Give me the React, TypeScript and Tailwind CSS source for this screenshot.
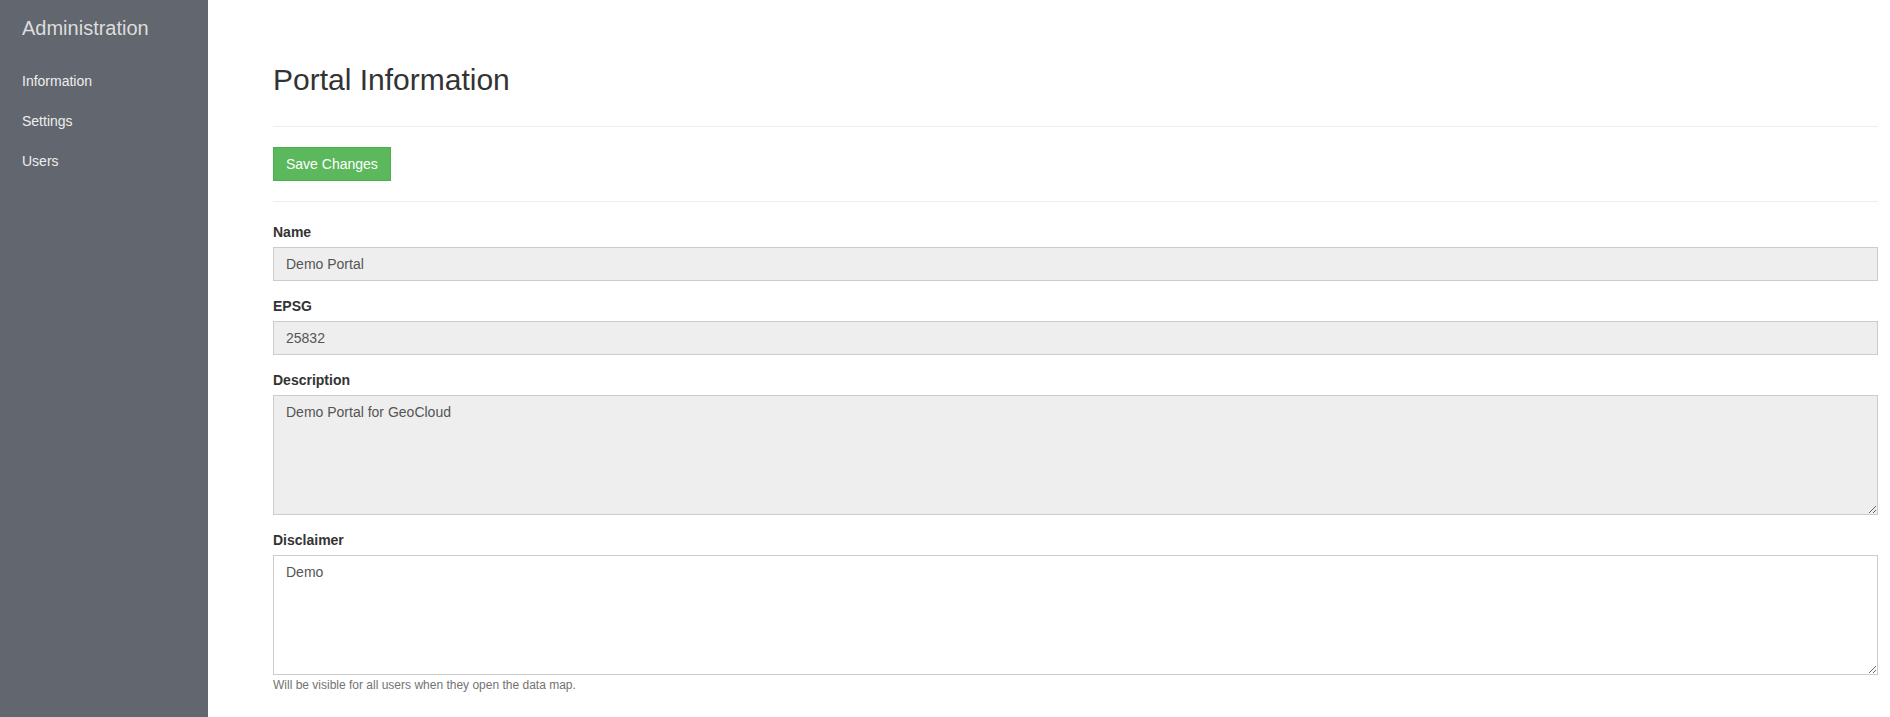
const NAV = ["Information", "Settings", "Users"];

function Field({ label, children }: { label: string; children: React.ReactNode }) {
  return (
    <div className="mb-[15px]">
      <label className="mb-[5px] block text-[14px] font-bold leading-[20px] text-[#333333]">{label}</label>
      {children}
    </div>
  );
}

const inputCls =
  "block w-full border border-[#cccccc] px-[12px] py-[6px] text-[14px] leading-[20px] text-[#555555] outline-none";

export default function App() {
  return (
    <div className="flex min-h-screen bg-white font-['Liberation_Sans',Arial,sans-serif]">
      <aside className="w-[208px] shrink-0 bg-[#62666e] px-[22px]">
        <h2 className="mt-[17px] text-[20px] leading-[22px] text-[#dddddd]">Administration</h2>
        <nav className="mt-[22px]">
          {NAV.map((item) => (
            <a key={item} href="#" className="block py-[10px] text-[14px] leading-[20px] text-[#eeeeee]">
              {item}
            </a>
          ))}
        </nav>
      </aside>

      <main className="flex-1 pl-[65px] pr-[12px] pt-[63px]">
        <div className="border-b border-[#eeeeee] pb-[30px]">
          <h1 className="text-[30px] leading-[33px] text-[#333333]">Portal Information</h1>
        </div>

        <div className="border-b border-[#eeeeee] py-[20px]">
          <button className="h-[34px] border border-[#4cae4c] bg-[#5cb85c] px-[12px] text-[14px] leading-[20px] text-white">
            Save Changes
          </button>
        </div>

        <form className="pt-[20px]">
          <Field label="Name">
            <input readOnly value="Demo Portal" className={`${inputCls} h-[34px] bg-[#eeeeee]`} />
          </Field>
          <Field label="EPSG">
            <input readOnly value="25832" className={`${inputCls} h-[34px] bg-[#eeeeee]`} />
          </Field>
          <Field label="Description">
            <textarea readOnly value="Demo Portal for GeoCloud" className={`${inputCls} h-[120px] bg-[#eeeeee]`} />
          </Field>
          <div>
            <label className="mb-[5px] block text-[14px] font-bold leading-[20px] text-[#333333]">Disclaimer</label>
            <textarea defaultValue="Demo" className={`${inputCls} h-[120px] bg-white`} />
            <p className="mt-[2px] text-[12px] leading-[17px] text-[#737373]">
              Will be visible for all users when they open the data map.
            </p>
          </div>
        </form>
      </main>
    </div>
  );
}
